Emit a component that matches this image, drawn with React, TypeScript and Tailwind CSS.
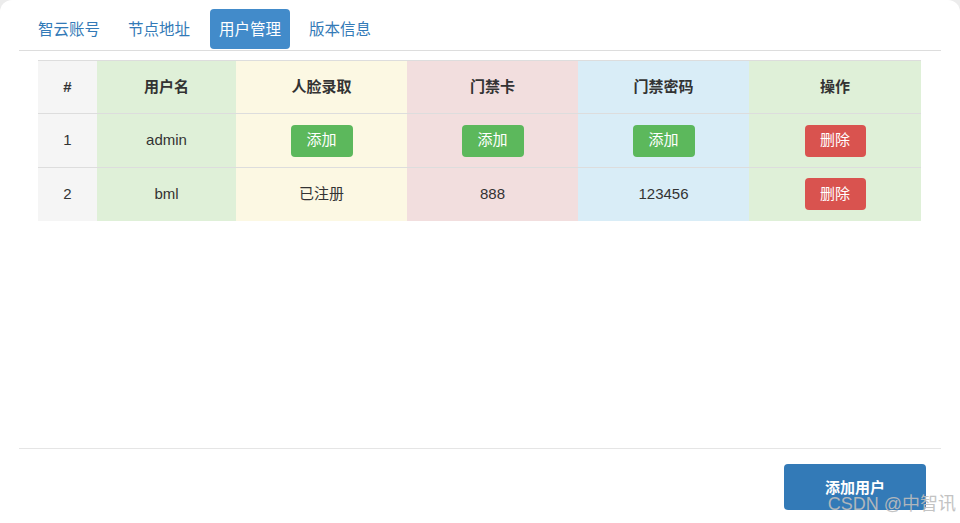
import { useState } from 'react';

const tabs = ['智云账号', '节点地址', '用户管理', '版本信息'];

const cols = [
  { title: '#', width: 'w-[59px]', bg: 'bg-[#f5f5f5]' },
  { title: '用户名', width: 'w-[139px]', bg: 'bg-[#dff0d8]' },
  { title: '人脸录取', width: 'w-[171px]', bg: 'bg-[#fcf8e3]' },
  { title: '门禁卡', width: 'w-[171px]', bg: 'bg-[#f2dede]' },
  { title: '门禁密码', width: 'w-[171px]', bg: 'bg-[#d9edf7]' },
  { title: '操作', width: 'w-[172px]', bg: 'bg-[#dff0d8]' },
];

const GreenBtn = ({ children }: { children: string }) => (
  <button className="h-[32px] w-[62px] rounded-[4px] bg-[#5cb85c] text-[15px] text-white">{children}</button>
);

const RedBtn = ({ children }: { children: string }) => (
  <button className="h-[32px] w-[61px] rounded-[4px] bg-[#d9534f] text-[15px] text-white">{children}</button>
);

export default function App() {
  const [active, setActive] = useState(2);

  const rows: React.ReactNode[][] = [
    ['1', 'admin', <GreenBtn>添加</GreenBtn>, <GreenBtn>添加</GreenBtn>, <GreenBtn>添加</GreenBtn>, <RedBtn>删除</RedBtn>],
    ['2', 'bml', '已注册', '888', '123456', <RedBtn>删除</RedBtn>],
  ];

  return (
    <div
      className="relative h-[523px] w-[960px] overflow-hidden bg-[#ececec] text-[#333]"
      style={{ fontFamily: '"Liberation Sans", "Noto Sans CJK SC", sans-serif' }}
    >
      <div className="flex h-full flex-col rounded-t-[12px] bg-white">
        {/* tabs */}
        <div className="mx-[19px] mt-[9px] flex border-b border-[#dddddd] pb-px">
          {tabs.map((t, i) => (
            <button
              key={t}
              onClick={() => setActive(i)}
              className={
                'ml-[10px] h-[40px] rounded-[4px] px-[9px] pt-[2px] text-[15.5px] ' +
                (i === 2 ? 'ml-[11px] ' : '') +
                (active === i ? 'bg-[#428bca] text-white' : 'text-[#337ab7]')
              }
            >
              {t}
            </button>
          ))}
        </div>

        {/* table */}
        <table className="mx-[38px] mt-[9px] w-[883px] table-fixed border-collapse text-[15px]">
          <thead>
            <tr className="h-[53px]">
              {cols.map((c) => (
                <th key={c.title} className={`${c.width} ${c.bg} border-t border-[#dddddd] font-bold text-[#333]`}>
                  {c.title}
                </th>
              ))}
            </tr>
          </thead>
          <tbody>
            {rows.map((r, ri) => (
              <tr key={ri} className={ri === 0 ? 'h-[54px]' : 'h-[53px]'}>
                {r.map((cell, ci) => (
                  <td key={ci} className={`${cols[ci].bg} border-t border-[#dddddd] text-center align-middle`}>
                    {cell}
                  </td>
                ))}
              </tr>
            ))}
          </tbody>
        </table>

        <div className="flex-1" />

        {/* footer */}
        <div className="mx-[19px] mb-[13px] flex justify-end border-t border-[#e5e5e5] pt-[15px]">
          <button className="mr-[15px] h-[46px] w-[142px] rounded-[4px] bg-[#337ab7] pt-[2px] text-[15px] font-bold text-white">
            添加用户
          </button>
        </div>
      </div>

      <div className="absolute bottom-[5px] right-[4px] text-[18px] text-[#bdbdbd] opacity-90">CSDN @中智讯</div>
    </div>
  );
}
